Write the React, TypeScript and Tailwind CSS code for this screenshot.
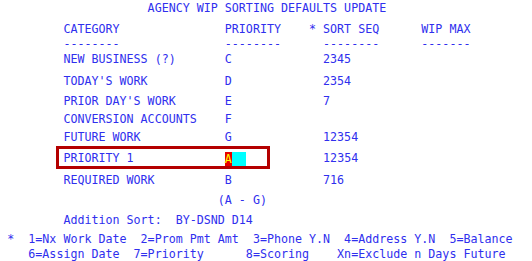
import React from "react";

// terminal screen: 7.02px per column, rows laid out top to bottom
const Row = ({ h, children }: { h: number; children: React.ReactNode }) => (
    <div className="whitespace-pre leading-[16px]" style={{ height: h }}>
        {children}
    </div>
);

export default function App() {
    return (
        <div
            className="w-[532px] h-[261px] bg-white text-[#2f2fee] text-[11.66px] overflow-hidden pl-[0.25px]"
            style={{ fontFamily: '"DejaVu Sans Mono", "Liberation Mono", monospace' }}
        >
            <Row h={21}>{"                     AGENCY WIP SORTING DEFAULTS UPDATE"}</Row>
            <Row h={15}>{"         CATEGORY               PRIORITY    * SORT SEQ      WIP MAX"}</Row>
            <Row h={15}>{"         --------               --------      --------      -------"}</Row>
            <Row h={22}>{"         NEW BUSINESS (?)       C             2345"}</Row>
            <Row h={20}>{"         TODAY'S WORK           D             2354"}</Row>
            <Row h={18}>{"         PRIOR DAY'S WORK       E             7"}</Row>
            <Row h={18}>{"         CONVERSION ACCOUNTS    F"}</Row>
            <Row h={21}>{"         FUTURE WORK            G             12354"}</Row>
            <div className="relative">
                <Row h={22}>
                    {"         PRIORITY 1             "}
                    <span className="inline-block h-[14px] leading-[14px] align-[-1px] bg-[#e80000] text-[#ffff00]">A</span>
                    <span className="inline-block h-[14px] leading-[14px] align-[-1px] bg-[#00ffff]">{"  "}</span>
                    {"           12354"}
                </Row>
                {/* annotation box drawn over the row */}
                <div className="absolute left-[56px] top-[-4px] w-[214px] h-[23px] border-[3px] border-[#b40000] pointer-events-none" />
            </div>
            <Row h={20}>{"         REQUIRED WORK          B             716"}</Row>
            <Row h={20}>{"                               (A - G)"}</Row>
            <Row h={19}>{"         Addition Sort:  BY-DSND D14"}</Row>
            <Row h={15}>{" *  1=Nx Work Date  2=Prom Pmt Amt  3=Phone Y.N  4=Address Y.N  5=Balance"}</Row>
            <Row h={15}>{"    6=Assign Date  7=Priority      8=Scoring    Xn=Exclude n Days Future"}</Row>
        </div>
    );
}
